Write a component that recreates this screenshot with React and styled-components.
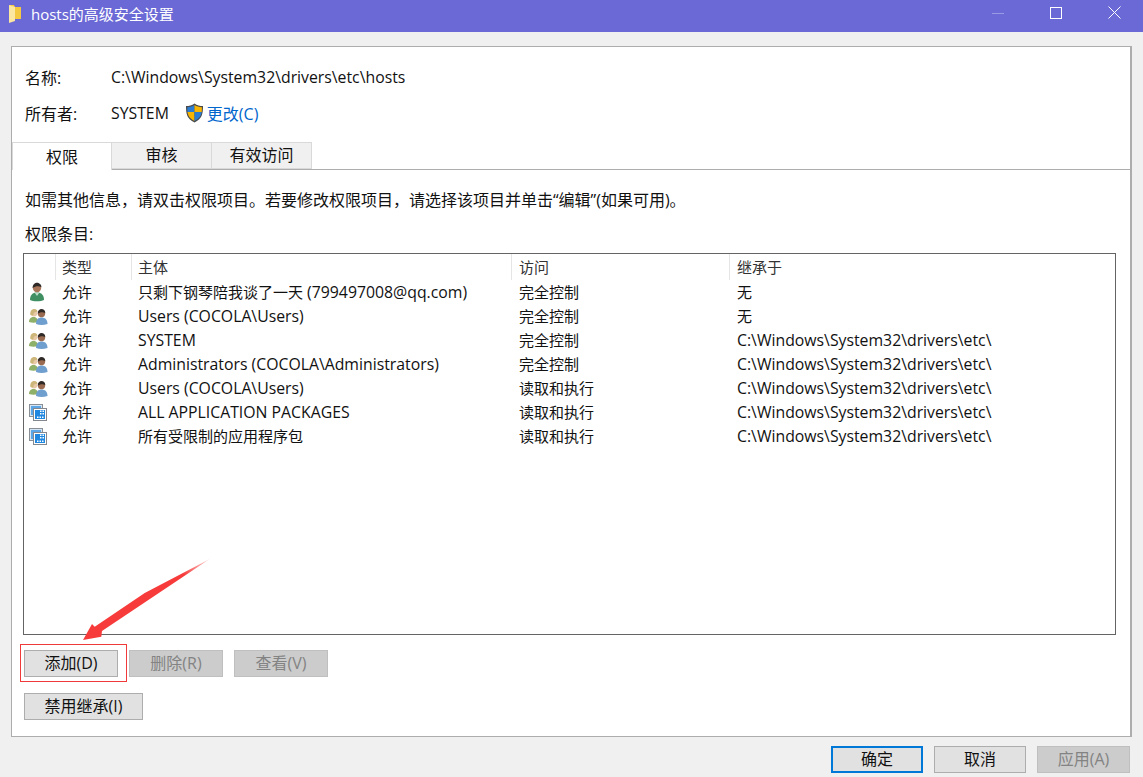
import React from "react"
import styled, { createGlobalStyle } from "styled-components"

const GlobalStyle = createGlobalStyle`
  html, body {
    margin: 0;
    padding: 0;
    background: #f0f0f0;
    overflow: hidden;
  }
  * {
    box-sizing: border-box;
  }
  body {
    font-family: "Open Sans", "Noto Sans CJK SC", sans-serif;
    font-size: 16px;
    color: #111;
  }
`

const Window = styled.div`
  position: relative;
  width: 1143px;
  height: 777px;
  background: #f0f0f0;
  display: flex;
  flex-direction: column;
`

const TitleBar = styled.div`
  height: 32px;
  background: #6b69d6;
  display: flex;
  align-items: center;
  padding-left: 9px;
  color: #fff;
  flex: none;
`

const TitleText = styled.span`
  margin-left: 9px;
  font-size: 15px;
  margin-top: -5px;
`

const WinControls = styled.div`
  margin-left: auto;
  display: flex;
  height: 100%;
`

const WinControl = styled.div`
  width: 58px;
  height: 100%;
  display: flex;
  align-items: center;
  justify-content: center;
  padding-bottom: 7px;
`

const FolderWrap = styled.span`
  display: inline-flex;
  margin-top: -5px;
`

const Panel = styled.div`
  margin: 14px 11px 0 11px;
  width: 1121px;
  height: 691px;
  background: #fff;
  border: 1px solid #adadad;
  border-right-width: 2px;
  flex: none;
  display: flex;
  flex-direction: column;
`

const InfoRow = styled.div`
  display: flex;
  align-items: center;
  height: 24px;
  padding-left: 13px;
  margin-top: ${p => p.$top}px;
`

const InfoLabel = styled.span`
  width: 86px;
  flex: none;
`

const LatinText = styled.span`
  font-size: 15.8px;
`

const CjkText = styled.span`
  font-size: 15px;
`

const ChangeLink = styled.span`
  color: #0066cc;
  margin-left: 3px;
`

const ShieldWrap = styled.span`
  display: inline-flex;
  margin-left: 16px;
`

const Tabs = styled.div`
  display: flex;
  height: 28px;
  margin-top: 17px;
  border-bottom: 1px solid #adadad;
  flex: none;
`

const Tab = styled.div`
  width: ${p => p.$width}px;
  height: ${p => (p.$active ? 28 : 27)}px;
  padding-bottom: ${p => (p.$active ? 2 : 4)}px;
  background: ${p => (p.$active ? "#fff" : "#f0f0f0")};
  border: 1px solid #d9d9d9;
  border-left-width: ${p => (p.$first ? 1 : 0)}px;
  border-bottom-width: ${p => (p.$active ? 0 : 1)}px;
  display: flex;
  align-items: center;
  justify-content: center;
  position: relative;
  z-index: ${p => (p.$active ? 1 : 0)};
`

const Content = styled.div`
  flex: 1;
  padding: 0 14px 0 11px;
  display: flex;
  flex-direction: column;
`

const Hint = styled.div`
  margin: 19px 0 0 2px;
  height: 22px;
  line-height: 22px;
`

const ListLabel = styled.div`
  margin: 12px 0 0 2px;
  height: 22px;
  line-height: 22px;
`

const ListBox = styled.div`
  margin-top: 8px;
  width: 1093px;
  height: 382px;
  border: 1px solid #646464;
  background: #fff;
  flex: none;
  font-size: 15px;
`

const Row = styled.div`
  display: grid;
  grid-template-columns: 32px 76px 380px 218px 1fr;
  height: ${p => (p.$header ? 26 : 24)}px;
  align-items: center;
  & > div:nth-child(n + 4) {
    padding-left: 7px;
  }
`

const HeaderCell = styled.div`
  height: 100%;
  padding: 0 0 2px 6px;
  display: flex;
  align-items: center;
  border-right: ${p => (p.$last ? 0 : 1)}px solid #e5e5e5;
  color: #333;
`

const Cell = styled.div`
  padding-left: 6px;
  white-space: nowrap;
  overflow: hidden;
  font-size: ${p => (p.$latin ? 15.8 : 15)}px;
  margin-top: ${p => (p.$latin ? -1 : -2)}px;
`

const IconCell = styled.div`
  display: flex;
  align-items: center;
  padding-left: 5px;
`

const ButtonRow = styled.div`
  display: flex;
  gap: 11px;
  margin: ${p => p.$top}px 0 0 1px;
`

const Button = styled.div`
  width: ${p => p.$width}px;
  height: 27px;
  padding-bottom: 3px;
  background: ${p => (p.$disabled ? "#cccccc" : "#e1e1e1")};
  border: ${p => (p.$focus ? "2px solid #0078d7" : p.$disabled ? "1px solid #bfbfbf" : "1px solid #adadad")};
  color: ${p => (p.$disabled ? "#838383" : "#111")};
  display: flex;
  align-items: center;
  justify-content: center;
  flex: none;
`

const Footer = styled.div`
  display: flex;
  justify-content: flex-end;
  gap: 11px;
  padding: 9px 13px 0 0;
`

const Highlight = styled.div`
  position: absolute;
  left: 20px;
  top: 644px;
  width: 107px;
  height: 38px;
  border: 1px solid #f03a3a;
`

const Arrow = styled.svg`
  position: absolute;
  left: 80px;
  top: 555px;
`

const rows = [
  ["user", "只剩下钢琴陪我谈了一天", " (799497008@qq.com)", "完全控制", "无", false],
  ["group", "", "Users (COCOLA\\Users)", "完全控制", "无", false],
  ["group", "", "SYSTEM", "完全控制", "C:\\Windows\\System32\\drivers\\etc\\", true],
  ["group", "", "Administrators (COCOLA\\Administrators)", "完全控制", "C:\\Windows\\System32\\drivers\\etc\\", true],
  ["group", "", "Users (COCOLA\\Users)", "读取和执行", "C:\\Windows\\System32\\drivers\\etc\\", true],
  ["package", "", "ALL APPLICATION PACKAGES", "读取和执行", "C:\\Windows\\System32\\drivers\\etc\\", true],
  ["package", "所有受限制的应用程序包", "", "读取和执行", "C:\\Windows\\System32\\drivers\\etc\\", true],
]

const FolderIcon = () => (
  <svg width="13" height="18" viewBox="0 0 13 18">
    <path d="M0 0h5l1 2h6v12H6z" fill="#f5c842" />
    <path d="M0 0l6 2v14l-6 2z" fill="#fbe6a2" />
  </svg>
)

const UserIcon = () => (
  <svg width="16" height="20" viewBox="0 0 16 20">
    <path d="M1 18c0-5 2.500-7.500 7-7.500s7 2.500 7 7.500c-3 1.800-11 1.800-14 0z" fill="#3f8f62" />
    <path d="M5.500 10.500L8 14l2.500-3.500z" fill="#bcdcc8" />
    <circle cx="8" cy="6" r="4.200" fill="#a9765a" />
    <path d="M3.600 6C3.600 2.500 6 .8 8 .8s4.500 1.500 4.500 4.500c-2.500-1.500-5.500-1.500-8.900.7z" fill="#2f2a28" />
  </svg>
)

const GroupIcon = () => (
  <svg width="19" height="17" viewBox="0 0 19 17">
    <path d="M0 14c0-3.500 2-5 4.500-5S9 10.500 9 14c-3 1-6 1-9 0z" fill="#8fb068" />
    <circle cx="5" cy="5" r="3.400" fill="#e8c9a8" />
    <path d="M1.400 7C1 3 3 1 5.300 1S8.500 2.500 8.500 4c-2.200-.4-3.800 0-4.300 3.500z" fill="#cdb67a" />
    <path d="M7 16c0-4.500 2.200-6.500 5.500-6.500S18.500 11.500 18.500 16c-4 1.200-8 1.200-11.500 0z" fill="#6f9fce" />
    <circle cx="12.500" cy="5.500" r="3.700" fill="#9a6b50" />
    <path d="M8.800 5.500c0-3 1.700-4.500 3.700-4.500s3.800 1.500 3.800 4c-2.200-1.200-4.300-1.200-7.500.5z" fill="#2f2a28" />
  </svg>
)

const PackageIcon = () => (
  <svg width="18" height="17" viewBox="0 0 18 17">
    <rect x="0.500" y="0.500" width="13" height="12" fill="#d7e6f5" stroke="#8a8f96" />
    <rect x="2" y="2" width="10" height="9" fill="#5aa6e6" />
    <rect x="4.500" y="4.500" width="13" height="12" fill="#fff" stroke="#84888e" />
    <rect x="6" y="6" width="10" height="9" fill="#1f87e0" />
    <rect x="11" y="6.500" width="1.500" height="1.500" fill="#fff" />
    <rect x="13.500" y="6.500" width="1.500" height="1.500" fill="#fff" />
    <rect x="11" y="9" width="1.500" height="1.500" fill="#fff" />
    <rect x="13.500" y="9" width="1.500" height="1.500" fill="#fff" />
    <rect x="8" y="12.500" width="1.500" height="1.500" fill="#fff" />
    <rect x="10.500" y="12.500" width="1.500" height="1.500" fill="#fff" />
    <rect x="13" y="12.500" width="1.500" height="1.500" fill="#fff" />
  </svg>
)

const ShieldIcon = () => (
  <svg width="19" height="20" viewBox="0 0 19 20">
    <path d="M9.500 0.500C7 2.500 4 3 1 3c0 8 1 13 8.500 16.500C17 16 18 11 18 3c-3 0-6-.5-8.500-2.500z" fill="#4a4a4a" />
    <path d="M9.500 2C7.500 3.500 5 4 2.300 4.200c0 1.500 0 3 .2 4.800h7V2z" fill="#2b7cd3" />
    <path d="M9.500 2v7h7.200c.2-1.800.2-3.300.2-4.800C14 4 11.500 3.500 9.500 2z" fill="#f7b500" />
    <path d="M2.500 9c.5 3.500 2 6.500 7 9V9z" fill="#f7b500" />
    <path d="M9.500 9v9c5-2.500 6.700-5.500 7.200-9z" fill="#2b7cd3" />
  </svg>
)

const RowIcon = ({ kind }) => {
  if (kind === "user") return <UserIcon />
  if (kind === "group") return <GroupIcon />
  return <PackageIcon />
}

const App = () => (
  <Window>
    <GlobalStyle />
    <TitleBar>
      <FolderWrap><FolderIcon /></FolderWrap>
      <TitleText>hosts的高级安全设置</TitleText>
      <WinControls>
        <WinControl>
          <svg width="12" height="12" viewBox="0 0 12 12">
            <path d="M0 6.500h12" stroke="#9a99e4" />
          </svg>
        </WinControl>
        <WinControl>
          <svg width="12" height="12" viewBox="0 0 12 12">
            <rect x="0.500" y="0.500" width="11" height="11" fill="none" stroke="#fff" />
          </svg>
        </WinControl>
        <WinControl>
          <svg width="13" height="13" viewBox="0 0 13 13">
            <path d="M.5.5l12 12M12.500.5l-12 12" stroke="#fff" />
          </svg>
        </WinControl>
      </WinControls>
    </TitleBar>

    <Panel>
      <InfoRow $top={18}>
        <InfoLabel>名称:</InfoLabel>
        <LatinText>C:\Windows\System32\drivers\etc\hosts</LatinText>
      </InfoRow>
      <InfoRow $top={12}>
        <InfoLabel>所有者:</InfoLabel>
        <LatinText>SYSTEM</LatinText>
        <ShieldWrap><ShieldIcon /></ShieldWrap>
        <ChangeLink>更改(C)</ChangeLink>
      </InfoRow>

      <Tabs>
        <Tab $width={100} $active $first>权限</Tab>
        <Tab $width={100}>审核</Tab>
        <Tab $width={100}>有效访问</Tab>
      </Tabs>

      <Content>
        <Hint>如需其他信息，请双击权限项目。若要修改权限项目，请选择该项目并单击“编辑”(如果可用)。</Hint>
        <ListLabel>权限条目:</ListLabel>
        <ListBox>
          <Row $header>
            <HeaderCell />
            <HeaderCell>类型</HeaderCell>
            <HeaderCell>主体</HeaderCell>
            <HeaderCell>访问</HeaderCell>
            <HeaderCell $last>继承于</HeaderCell>
          </Row>
          {rows.map((r, i) => (
            <Row key={i}>
              <IconCell><RowIcon kind={r[0]} /></IconCell>
              <Cell>允许</Cell>
              <Cell $latin><CjkText>{r[1]}</CjkText><LatinText>{r[2]}</LatinText></Cell>
              <Cell>{r[3]}</Cell>
              <Cell $latin={r[5]}>{r[4]}</Cell>
            </Row>
          ))}
        </ListBox>
        <ButtonRow $top={15}>
          <Button $width={94}>添加(D)</Button>
          <Button $width={94} $disabled>删除(R)</Button>
          <Button $width={94} $disabled>查看(V)</Button>
        </ButtonRow>
        <ButtonRow $top={16}>
          <Button $width={119}>禁用继承(I)</Button>
        </ButtonRow>
      </Content>
    </Panel>

    <Footer>
      <Button $width={92} $focus>确定</Button>
      <Button $width={92}>取消</Button>
      <Button $width={93} $disabled>应用(A)</Button>
    </Footer>

    <Highlight />
    <Arrow width="135" height="90" viewBox="0 0 135 90">
      <defs>
        <linearGradient id="arrowFade" x1="0" y1="1" x2="1" y2="0">
          <stop offset="0" stopColor="#f73b3b" />
          <stop offset="0.8" stopColor="#f73b3b" />
          <stop offset="1" stopColor="#f73b3b" stopOpacity="0.2" />
        </linearGradient>
      </defs>
      <path d="M3 85L12 69 14.700 71.700 64.700 38 129.700 4 22 76 21.300 81.700z" fill="url(#arrowFade)" />
    </Arrow>
  </Window>
)

export default App
